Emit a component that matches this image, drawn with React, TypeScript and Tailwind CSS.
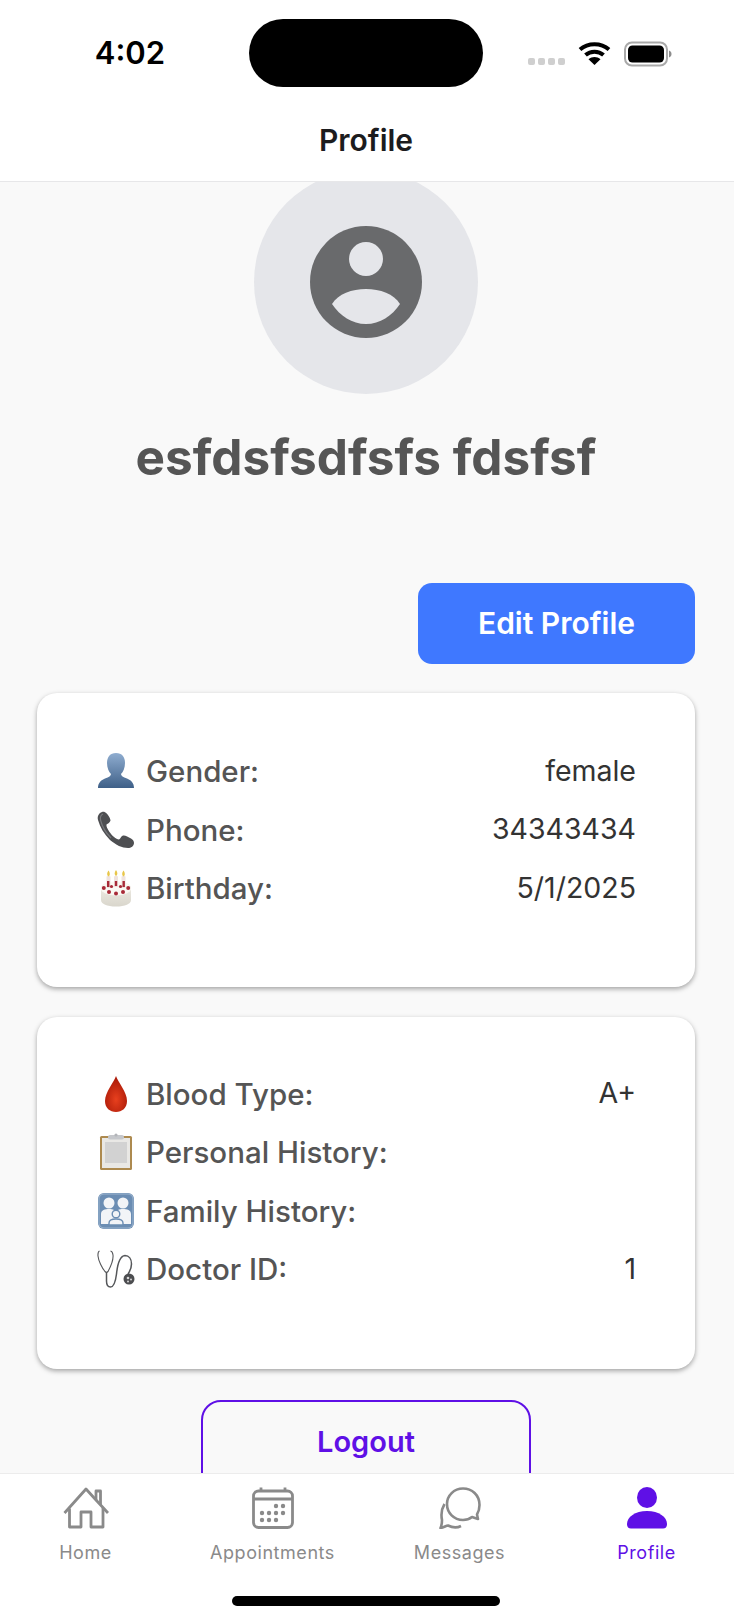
import React from "react";

function Wifi() {
  return (
    <svg width="33" height="24" viewBox="0 0 33 24" fill="none">
      <path d="M2 8.5C10 1.5 23 1.5 31 8.5" stroke="#000" strokeWidth="4" />
      <path d="M7.5 14C12.5 9.5 20.5 9.5 25.5 14" stroke="#000" strokeWidth="4" />
      <path d="M16.5 24L10.5 18.2C14 15.4 19 15.4 22.5 18.2Z" fill="#000" />
    </svg>
  );
}

function Battery() {
  return (
    <svg width="48" height="26" viewBox="0 0 48 26" fill="none">
      <rect x="1" y="1.5" width="42" height="23" rx="7" stroke="#a9a9a9" strokeWidth="2" />
      <rect x="4" y="4.5" width="36" height="17" rx="4.5" fill="#000" />
      <path d="M45 9.5C47 10.5 47.5 11.5 47.5 13C47.5 14.5 47 15.5 45 16.5Z" fill="#8d8d8d" />
    </svg>
  );
}

function AvatarIcon() {
  return (
    <svg width="112" height="112" viewBox="0 0 112 112">
      <circle cx="56" cy="56" r="56" fill="#696a6c" />
      <circle cx="56" cy="33" r="17" fill="#e5e6ea" />
      <path d="M22 78C28 68 42 63 56 63C70 63 84 68 90 78C82 90 70 98 56 98C42 98 30 90 22 78Z" fill="#e5e6ea" />
    </svg>
  );
}

function GenderIcon() {
  return (
    <svg width="38" height="38" viewBox="0 0 38 38">
      <defs>
        <linearGradient id="bust" x1="0" y1="0" x2="0" y2="1">
          <stop offset="0" stopColor="#8fadd0" />
          <stop offset="1" stopColor="#3f6088" />
        </linearGradient>
      </defs>
      <path d="M19 1C25 1 28 5 28 11C28 16 26 20 24 22C24 24 26 25 30 26.500C34 28 37 31 37 36H1C1 31 4 28 8 26.500C12 25 14 24 14 22C12 20 10 16 10 11C10 5 13 1 19 1Z" fill="url(#bust)" />
    </svg>
  );
}

function PhoneIcon() {
  return (
    <svg width="38" height="38" viewBox="0 0 38 38">
      <path d="M5 1C2 2 0 5 1 9C3 16 7 23 13 29C19 34 25 37 31 37C34 37 37 35 37 32C37 30 36 29 34 27.500C31 25.500 28 24 26 24.500C24 25 23.500 28 22 28.500C19 28.500 15 24.500 12.500 21C10.500 18 9 15 9.500 13.500C11 12.500 13 11.500 13.500 9.500C13.500 7 10 2 8 1.200C7 0.800 6 0.700 5 1Z" fill="#4e4f52" />
      <path d="M6 3C4 4 3 6 3.500 9C5 15 9 22 14 27" stroke="#77787b" strokeWidth="1.200" fill="none" />
    </svg>
  );
}

function CakeIcon() {
  return (
    <svg width="38" height="38" viewBox="0 0 38 38">
      <defs>
        <linearGradient id="cake" x1="0" y1="0" x2="0" y2="1">
          <stop offset="0" stopColor="#f2efe8" />
          <stop offset="1" stopColor="#d9d6cc" />
        </linearGradient>
      </defs>
      <path d="M4 19C4 15 10 13 19 13C28 13 34 15 34 19V31C34 35 28 37.500 19 37.500C10 37.500 4 35 4 31Z" fill="url(#cake)" />
      <ellipse cx="19" cy="19.500" rx="15" ry="7" fill="#faf8f3" />
      <rect x="9.500" y="7" width="4" height="12" rx="1" fill="#efe3de" />
      <rect x="17" y="7" width="4" height="11" rx="1" fill="#efe3de" />
      <rect x="24.500" y="7" width="4" height="12" rx="1" fill="#efe3de" />
      <path d="M11.500 1.500C13.300 3.800 13.300 6.500 11.500 7.500C9.700 6.500 9.700 3.800 11.500 1.500Z" fill="#e8c64a" />
      <path d="M19 1C20.800 3.300 20.800 6 19 7C17.200 6 17.200 3.300 19 1Z" fill="#e8c64a" />
      <path d="M26.500 1.500C28.300 3.800 28.300 6.500 26.500 7.500C24.700 6.500 24.700 3.800 26.500 1.500Z" fill="#e8c64a" />
      <g fill="#a82a38">
        <rect x="10" y="12" width="2.400" height="6" />
        <rect x="17.800" y="12" width="2.400" height="5" />
        <rect x="25.500" y="12" width="2.400" height="6" />
        <circle cx="6.800" cy="19" r="2" />
        <circle cx="12" cy="23" r="2" />
        <circle cx="19" cy="24.500" r="2" />
        <circle cx="26" cy="23" r="2" />
        <circle cx="31.200" cy="19" r="2" />
        <circle cx="14.500" cy="17.500" r="1.600" />
        <circle cx="23.500" cy="17.500" r="1.600" />
      </g>
    </svg>
  );
}

function DropIcon() {
  return (
    <svg width="38" height="38" viewBox="0 0 38 38">
      <defs>
        <radialGradient id="drop" cx="0.5" cy="0.65" r="0.6">
          <stop offset="0" stopColor="#e8401e" />
          <stop offset="1" stopColor="#ab1a08" />
        </radialGradient>
      </defs>
      <path d="M19 1C21 7 30 17 30 26C30 33 25 37 19 37C13 37 8 33 8 26C8 17 17 7 19 1Z" fill="url(#drop)" />
    </svg>
  );
}

function ClipboardIcon() {
  return (
    <svg width="38" height="38" viewBox="0 0 38 38">
      <rect x="3" y="3" width="32" height="34" rx="1.500" fill="#ad8a4f" />
      <rect x="5" y="5" width="28" height="30" fill="#e9e8e5" />
      <rect x="8" y="9" width="22" height="21" fill="#d2d2d2" />
      <rect x="11" y="2" width="16" height="4.500" rx="2" fill="#c5c7cb" />
      <circle cx="19" cy="2" r="1.600" fill="#b3b5b9" />
    </svg>
  );
}

function FamilyIcon() {
  return (
    <svg width="38" height="38" viewBox="0 0 38 38">
      <rect x="1" y="1" width="36" height="36" rx="6" fill="#6b8db3" />
      <rect x="2" y="2" width="34" height="34" rx="5" fill="none" stroke="#9db5cf" strokeWidth="1" />
      <circle cx="12" cy="11" r="5.500" fill="#f2f4f7" />
      <circle cx="26" cy="11" r="5.500" fill="#f2f4f7" />
      <path d="M4 32V22C4 18 8 17 12 17C16 17 19 18 19 21C19 18 22 17 26 17C30 17 34 18 34 22V32Z" fill="#f2f4f7" />
      <circle cx="19" cy="22" r="3.800" fill="#f2f4f7" stroke="#6b8db3" strokeWidth="1.400" />
      <path d="M12 33V31C12 28 15 27 19 27C23 27 26 28 26 31V33Z" fill="#f2f4f7" stroke="#6b8db3" strokeWidth="1.400" />
    </svg>
  );
}

function StethoscopeIcon() {
  return (
    <svg width="38" height="38" viewBox="0 0 38 38" fill="none">
      <path d="M2.500 1C1 1.500 0.800 3 1 6C1.500 11 5 18 8 21.500C9 22.500 10 22.500 11 21.500C13.500 17 16.500 10 16 5C15.700 2.500 15 1.200 13.500 1" stroke="#55575a" strokeWidth="1.100" />
      <path d="M9.500 22V31C9.500 35 11 37 13.500 37C17 37 18.500 32 19.500 24C20.500 14 23 6 28 5.500C32 5.500 34.500 9 34.500 14C34.500 18 33 21 31 24" stroke="#55575a" strokeWidth="1.500" />
      <circle cx="32" cy="29" r="5.500" fill="#4c4d50" />
      <circle cx="31" cy="28" r="1.300" fill="#d6d6d6" />
      <circle cx="34" cy="29.500" r="1" fill="#d6d6d6" />
      <circle cx="31" cy="31.500" r="1" fill="#d6d6d6" />
    </svg>
  );
}

function HomeIcon() {
  return (
    <svg width="46" height="42" viewBox="0 0 46 42" fill="none" stroke="#8a8a8a" strokeWidth="2.800" strokeLinejoin="round">
      <path d="M1.500 26L23 2L33 13M45 26L33 13" />
      <path d="M33 13V4H37.500V18" />
      <path d="M6.500 21.500V40H18V25H28V40H40V21" />
    </svg>
  );
}

function CalendarIcon() {
  return (
    <svg width="42" height="42" viewBox="0 0 42 42" fill="none">
      <rect x="1.500" y="4" width="39" height="36.500" rx="5" stroke="#8a8a8a" strokeWidth="2.800" />
      <path d="M1.500 12H40.500" stroke="#8a8a8a" strokeWidth="2.800" />
      <path d="M9 0.500V4M33 0.500V4" stroke="#8a8a8a" strokeWidth="2.800" />
      <g fill="#8a8a8a">
        <circle cx="24" cy="19" r="2.200" />
        <circle cx="31" cy="19" r="2.200" />
        <circle cx="10" cy="26" r="2.200" />
        <circle cx="17" cy="26" r="2.200" />
        <circle cx="24" cy="26" r="2.200" />
        <circle cx="31" cy="26" r="2.200" />
        <circle cx="10" cy="33" r="2.200" />
        <circle cx="17" cy="33" r="2.200" />
        <circle cx="24" cy="33" r="2.200" />
      </g>
    </svg>
  );
}

function MessagesIcon() {
  return (
    <svg width="42" height="42" viewBox="0 0 42 42" fill="none" stroke="#8a8a8a" strokeWidth="2.600" strokeLinejoin="round">
      <path d="M24 1.500C33 1.500 40.500 8 40.500 18C40.500 22 39.500 25 38 27.500L39 32L33 30C30.500 32 27.500 33 24 33C15 33 8 26 8 17C8 8.500 15 1.500 24 1.500Z" />
      <path d="M5.500 17C2.500 22 2 28 3 33C3 36 2.500 39 1.500 41C5 40.500 7 38.500 9 38.500C13 40.500 18 41 22 39" />
    </svg>
  );
}

function ProfileTabIcon() {
  return (
    <svg width="40" height="42" viewBox="0 0 40 42" fill="#5f10e6">
      <ellipse cx="20" cy="10.500" rx="10" ry="10.500" />
      <path d="M0 37C0 30 8 24 20 24C32 24 40 30 40 37C40 40 38.500 41.500 36 41.500H4C1.500 41.500 0 40 0 37Z" />
    </svg>
  );
}

function Row({ icon, label, value }: { icon: React.ReactNode; label: string; value?: string }) {
  return (
    <div className="flex h-[58.500px] items-center justify-between">
      <div className="flex items-center">
        <div className="mr-[11px] flex h-[38px] w-[38px] items-center justify-center">{icon}</div>
        <span className="text-[29.500px] font-medium text-[#555555]">{label}</span>
      </div>
      {value ? <span className="-mr-[1px] text-[28.500px] font-normal text-[#333333]">{value}</span> : null}
    </div>
  );
}

function Tab({ icon, label, active }: { icon: React.ReactNode; label: string; active?: boolean }) {
  return (
    <div className="flex w-[187px] shrink-0 flex-col items-center">
      <div className="flex h-[42px] items-end justify-center">{icon}</div>
      <span className={"mt-[13px] text-[18px] leading-[22px] tracking-[0.55px] " + (active ? "text-[#5f10e6]" : "text-[#8a8a8a]")}>{label}</span>
    </div>
  );
}

export default function App() {
  return (
    <div className="flex h-[1614px] w-[734px] flex-col overflow-hidden bg-white font-['Inter','Liberation_Sans',sans-serif]">
      <header className="z-10 h-[182px] shrink-0 border-b border-[#e7e7e9] bg-white">
        <div className="flex h-[106px] items-start">
          <div className="mt-[33px] w-[249px] pl-[11px] text-center text-[31px] font-semibold leading-[40px] text-black">4:02</div>
          <div className="mt-[19px] h-[68px] w-[234px] rounded-[34px] bg-black" />
          <div className="mt-[41px] ml-[45px] flex items-start">
            <div className="mt-[17px] flex gap-[3px]">
              <span className="h-[7px] w-[7px] rounded-[2px] bg-[#cfcfcf]" />
              <span className="h-[7px] w-[7px] rounded-[2px] bg-[#cfcfcf]" />
              <span className="h-[7px] w-[7px] rounded-[2px] bg-[#cfcfcf]" />
              <span className="h-[7px] w-[7px] rounded-[2px] bg-[#cfcfcf]" />
            </div>
            <div className="ml-[13px]"><Wifi /></div>
            <div className="ml-[13px]"><Battery /></div>
          </div>
        </div>
        <div className="mt-[14px] w-[732px] text-center text-[30px] font-semibold leading-[40px] text-[#1c1c1e]">Profile</div>
      </header>

      <main className="min-h-0 w-[732px] flex-1 bg-[#f9f9f9] shadow-[2px_0_0_#f9f9f9]">
        <div className="mx-auto -mt-[12px] flex h-[224px] w-[224px] items-center justify-center rounded-full bg-[#e5e6ea]">
          <AvatarIcon />
        </div>
        <h1 className="mt-[34px] text-center text-[49.500px] font-bold leading-[58px] text-[#555555]">esfdsfsdfsfs fdsfsf</h1>
        <div className="mt-[97px] flex justify-end pr-[37px]">
          <div className="flex h-[81px] w-[277px] items-center justify-center rounded-[14px] bg-[#3f78ff] text-[30px] font-semibold text-white">Edit Profile</div>
        </div>
        <section className="mx-[37px] mt-[29px] rounded-[20px] bg-white px-[60px] pt-[49px] pb-[69px] shadow-[0_2px_5px_rgba(0,0,0,0.35)]">
          <Row icon={<GenderIcon />} label="Gender:" value="female" />
          <Row icon={<PhoneIcon />} label="Phone:" value="34343434" />
          <Row icon={<CakeIcon />} label="Birthday:" value="5/1/2025" />
        </section>
        <section className="mx-[37px] mt-[30px] rounded-[20px] bg-white px-[60px] pt-[48px] pb-[70px] shadow-[0_2px_5px_rgba(0,0,0,0.35)]">
          <Row icon={<DropIcon />} label="Blood Type:" value="A+" />
          <Row icon={<ClipboardIcon />} label="Personal History:" />
          <Row icon={<FamilyIcon />} label="Family History:" />
          <Row icon={<StethoscopeIcon />} label="Doctor ID:" value="1" />
        </section>
        <div className="mx-auto mt-[31px] flex h-[110px] w-[330px] items-start justify-center rounded-[20px] border-2 border-[#5f10e6] pt-[18px] text-[29px] font-semibold text-[#5f10e6]">Logout</div>
      </main>

      <nav className="z-10 h-[141px] shrink-0 border-t border-[#ececec] bg-white">
        <div className="-ml-[8px] flex pt-[13px]">
          <Tab icon={<HomeIcon />} label="Home" />
          <Tab icon={<CalendarIcon />} label="Appointments" />
          <Tab icon={<MessagesIcon />} label="Messages" />
          <Tab icon={<ProfileTabIcon />} label="Profile" active />
        </div>
        <div className="mt-[32px] ml-[232px] h-[10px] w-[268px] rounded-full bg-black" />
      </nav>
    </div>
  );
}
